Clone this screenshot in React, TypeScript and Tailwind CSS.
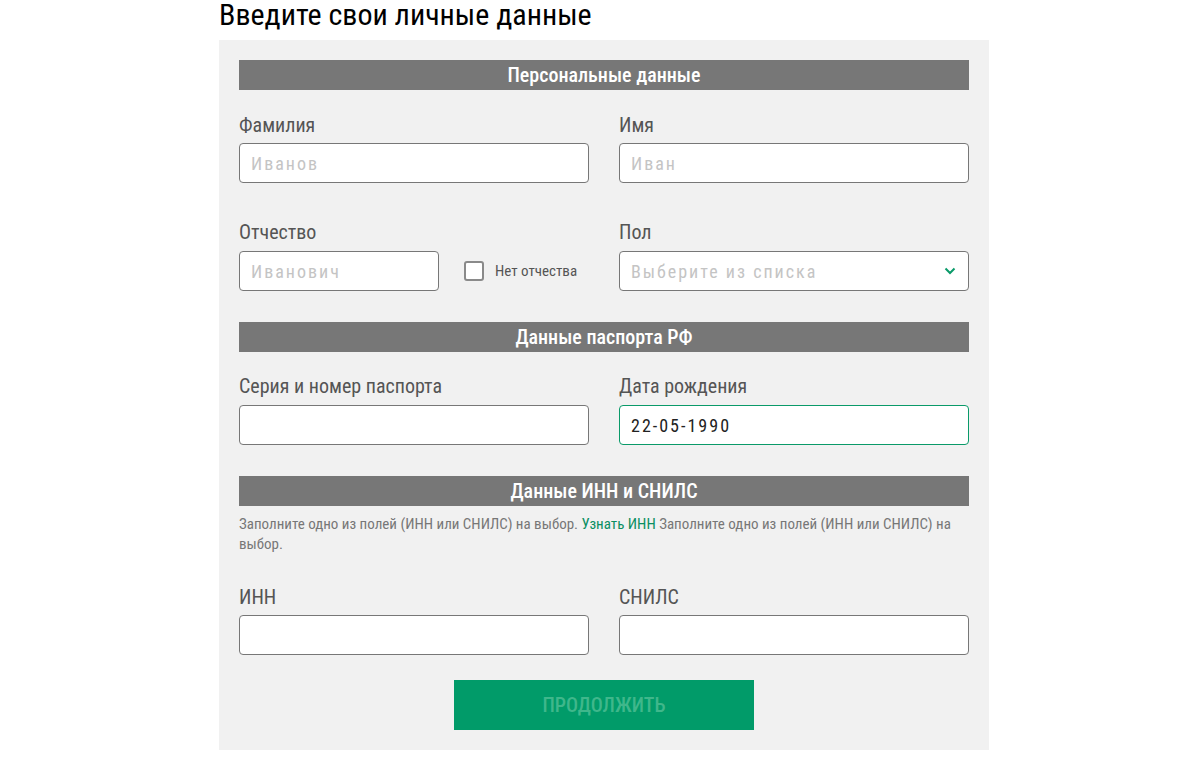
const font = "font-['Roboto_Condensed',Roboto,sans-serif]"

function SectionHeader({ title }: { title: string }) {
  return (
    <div className="h-[30px] bg-[#777777] text-white text-[20px] font-medium leading-[30px] text-center">
      {title}
    </div>
  )
}

function Label({ children }: { children: React.ReactNode }) {
  return <div className="h-[24px] leading-[24px] text-[20px] text-[#555555] mb-[6px]">{children}</div>
}

function TextInput({
  placeholder,
  value,
  focused,
  className = '',
}: {
  placeholder?: string
  value?: string
  focused?: boolean
  className?: string
}) {
  return (
    <input
      type="text"
      readOnly
      placeholder={placeholder}
      defaultValue={value}
      className={`h-[40px] bg-white rounded-[4px] border px-[11px] text-[18px] tracking-[2px] text-[#222222] placeholder:text-[#c4c4c4] outline-none ${
        focused ? 'border-[#0a9a69]' : 'border-[#777777]'
      } ${className}`}
    />
  )
}

export default function App() {
  return (
    <div className={`${font} w-[770px] ml-[219px] bg-white`}>
      <h1 className="text-[30px] leading-[30px] text-black mb-[10px]">Введите свои личные данные</h1>

      <div className="bg-[#f1f1f1] p-[20px]">
        <SectionHeader title="Персональные данные" />

        {/* Фамилия / Имя */}
        <div className="grid grid-cols-2 gap-x-[30px] mt-[23px]">
          <div className="flex flex-col">
            <Label>Фамилия</Label>
            <TextInput placeholder="Иванов" />
          </div>
          <div className="flex flex-col">
            <Label>Имя</Label>
            <TextInput placeholder="Иван" />
          </div>
        </div>

        {/* Отчество / Пол */}
        <div className="grid grid-cols-2 gap-x-[30px] mt-[37px]">
          <div className="flex flex-col">
            <div className="h-[24px] leading-[24px] text-[20px] text-[#555555] mb-[7px]">Отчество</div>
            <div className="flex items-center">
              <TextInput placeholder="Иванович" className="w-[200px]" />
              <label className="flex items-center ml-[25px] gap-[11px]">
                <span className="w-[20px] h-[20px] rounded-[3px] border-2 border-[#8a8a8a] bg-white" />
                <span className="text-[15px] text-[#555555]">Нет отчества</span>
              </label>
            </div>
          </div>
          <div className="flex flex-col">
            <div className="h-[24px] leading-[24px] text-[20px] text-[#555555] mb-[7px]">Пол</div>
            <div className="h-[40px] bg-white rounded-[4px] border border-[#777777] pl-[11px] pr-[12px] flex items-center justify-between">
              <span className="text-[18px] tracking-[2px] text-[#c4c4c4]">Выберите из списка</span>
              <svg width="12" height="8" viewBox="0 0 12 8">
                <path d="M1.5 1.5 L6 6 L10.5 1.5" fill="none" stroke="#0a9a69" strokeWidth="2" />
              </svg>
            </div>
          </div>
        </div>

        <div className="mt-[31px]">
          <SectionHeader title="Данные паспорта РФ" />
        </div>

        {/* Паспорт / Дата */}
        <div className="grid grid-cols-2 gap-x-[30px] mt-[22px]">
          <div className="flex flex-col">
            <div className="h-[24px] leading-[24px] text-[20px] text-[#555555] mb-[7px]">Серия и номер паспорта</div>
            <TextInput />
          </div>
          <div className="flex flex-col">
            <div className="h-[24px] leading-[24px] text-[20px] text-[#555555] mb-[7px]">Дата рождения</div>
            <TextInput value="22-05-1990" focused />
          </div>
        </div>

        <div className="mt-[31px]">
          <SectionHeader title="Данные ИНН и СНИЛС" />
        </div>

        <p className="mt-[8px] text-[15px] leading-[20px] text-[#777777]">
          Заполните одно из полей (ИНН или СНИЛС) на выбор.{' '}
          <a className="text-[#0a8f62]">Узнать ИНН</a> Заполните одно из полей (ИНН или СНИЛС) на выбор.
        </p>

        {/* ИНН / СНИЛС */}
        <div className="grid grid-cols-2 gap-x-[30px] mt-[31px]">
          <div className="flex flex-col">
            <Label>ИНН</Label>
            <TextInput />
          </div>
          <div className="flex flex-col">
            <Label>СНИЛС</Label>
            <TextInput />
          </div>
        </div>

        <div className="flex justify-center mt-[25px]">
          <button className="w-[300px] h-[50px] bg-[#019b69] text-[#3fb78b] text-[20px] font-medium uppercase">
            Продолжить
          </button>
        </div>
      </div>
    </div>
  )
}
